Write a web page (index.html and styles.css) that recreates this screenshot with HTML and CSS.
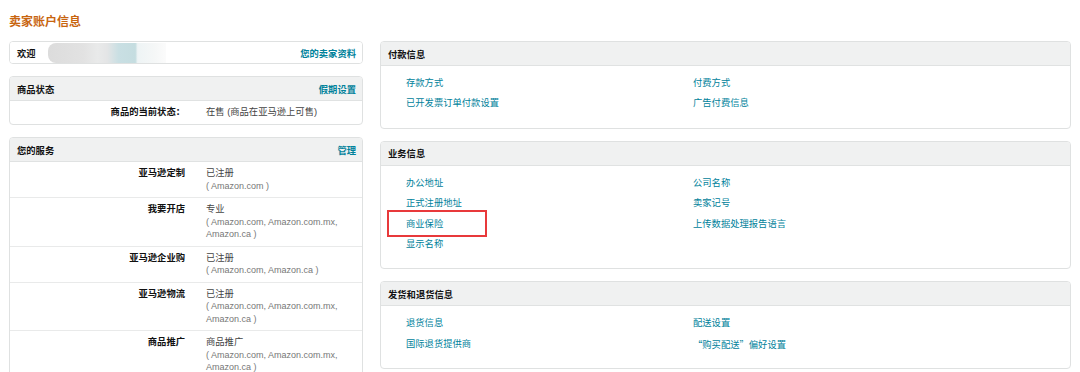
FILE: index.html
```html
<!DOCTYPE html>
<html lang="zh-CN">
<head>
    <meta charset="UTF-8">
    <title>卖家账户信息</title>
    <link rel="stylesheet" href="styles.css">
</head>
<body>
    <h1 class="page-title">卖家账户信息</h1>
    <div class="layout">
        <div class="left-col">
            <div class="box">
                <div class="box-head welcome">
                    <span class="head-title">欢迎</span>
                    <span class="blurred"></span>
                    <a class="head-link" href="#">您的卖家资料</a>
                </div>
            </div>

            <div class="box">
                <div class="box-head">
                    <span class="head-title">商品状态</span>
                    <a class="head-link" href="#">假期设置</a>
                </div>
                <div class="row status-row">
                    <div class="label">商品的当前状态：</div>
                    <div class="value">在售 (商品在亚马逊上可售)</div>
                </div>
            </div>

            <div class="box">
                <div class="box-head">
                    <span class="head-title">您的服务</span>
                    <a class="head-link" href="#">管理</a>
                </div>
                <div class="row">
                    <div class="label">亚马逊定制</div>
                    <div class="value">已注册<span class="sub">( Amazon.com )</span></div>
                </div>
                <div class="row">
                    <div class="label">我要开店</div>
                    <div class="value">专业<span class="sub">( Amazon.com, Amazon.com.mx, Amazon.ca )</span></div>
                </div>
                <div class="row">
                    <div class="label">亚马逊企业购</div>
                    <div class="value">已注册<span class="sub">( Amazon.com, Amazon.ca )</span></div>
                </div>
                <div class="row">
                    <div class="label">亚马逊物流</div>
                    <div class="value">已注册<span class="sub">( Amazon.com, Amazon.com.mx, Amazon.ca )</span></div>
                </div>
                <div class="row">
                    <div class="label">商品推广</div>
                    <div class="value">商品推广<span class="sub">( Amazon.com, Amazon.com.mx, Amazon.ca )</span></div>
                </div>
            </div>
        </div>

        <div class="right-col">
            <div class="box">
                <div class="box-head">
                    <span class="head-title">付款信息</span>
                </div>
                <div class="links">
                    <a href="#">存款方式</a>
                    <a href="#">付费方式</a>
                    <a href="#">已开发票订单付款设置</a>
                    <a href="#">广告付费信息</a>
                </div>
            </div>

            <div class="box">
                <div class="box-head">
                    <span class="head-title">业务信息</span>
                </div>
                <div class="links">
                    <a href="#">办公地址</a>
                    <a href="#">公司名称</a>
                    <a href="#">正式注册地址</a>
                    <a href="#">卖家记号</a>
                    <a href="#" class="marked">商业保险</a>
                    <a href="#">上传数据处理报告语言</a>
                    <a href="#">显示名称</a>
                </div>
            </div>

            <div class="box">
                <div class="box-head">
                    <span class="head-title">发货和退货信息</span>
                </div>
                <div class="links">
                    <a href="#">退货信息</a>
                    <a href="#">配送设置</a>
                    <a href="#">国际退货提供商</a>
                    <a href="#" class="cjk">“购买配送”偏好设置</a>
                </div>
            </div>
        </div>
    </div>
</body>
</html>
```

FILE: styles.css
```css
body {
    margin: 0;
    padding: 0 9px;
    background-color: #fff;
    font-family: "Liberation Sans", Arial, "Noto Sans CJK SC", sans-serif;
    font-size: 9.3px;
    color: #111;
}

a {
    color: #00829b;
    text-decoration: none;
}

.page-title {
    margin: 0;
    padding-top: 12px;
    height: 41px;
    box-sizing: border-box;
    font-size: 12px;
    font-weight: bold;
    color: #c8650f;
}

.layout {
    display: flex;
    align-items: flex-start;
    gap: 17px;
}

.left-col {
    width: 354px;
    display: flex;
    flex-direction: column;
    gap: 12px;
}

.right-col {
    width: 691px;
    display: flex;
    flex-direction: column;
    gap: 12px;
}

.box {
    border: 1px solid #dfe1e1;
    border-radius: 4px;
    background-color: #fff;
    overflow: hidden;
    position: relative;
}

.box-head {
    display: flex;
    align-items: center;
    height: 23px;
    padding: 0 6px 0 7px;
    background-color: #f0f1f1;
    border-bottom: 1px solid #e0e2e2;
}

.box-head.welcome {
    background-color: #fff;
    border-bottom: none;
    height: 21px;
}

.head-title {
    font-weight: bold;
}

.head-link {
    margin-left: auto;
    font-weight: bold;
}

.blurred {
    width: 118px;
    height: 20px;
    margin-left: 12px;
    border-radius: 8px 0 0 8px;
    background: linear-gradient(90deg, #dcdcdc 0%, #e2e2e2 30%, #e9eaea 42%, #e4e5e6 50%, #c9dfe3 60%, #c5dde0 74%, #eef4f5 76%, #f5f7f7 90%, #fbfbfb 100%);
}

.row {
    display: grid;
    grid-template-columns: 175px 1fr;
    column-gap: 21px;
    padding: 5px 0;
    line-height: 12.5px;
    border-top: 1px solid #e9eaea;
}

.box-head + .row {
    border-top: none;
}

.status-row {
    padding: 5px 0 5px;
    line-height: 13px;
}

.label {
    text-align: right;
    font-weight: bold;
}

.value {
    color: #444;
    padding-right: 10px;
}

.sub {
    display: block;
    color: #777;
    font-size: 9px;
    width: 150px;
}

.links {
    display: grid;
    grid-template-columns: 287px 1fr;
    align-items: start;
    padding: 7px 25px 14px;
    line-height: 20.4px;
}

.links a {
    justify-self: start;
}

.links .cjk {
    font-family: "Noto Sans CJK SC", sans-serif;
}

.marked {
    position: relative;
}

.marked::after {
    content: "";
    position: absolute;
    left: -19px;
    top: -4px;
    width: 96px;
    height: 23px;
    border: 2px solid #e8393b;
}
```
